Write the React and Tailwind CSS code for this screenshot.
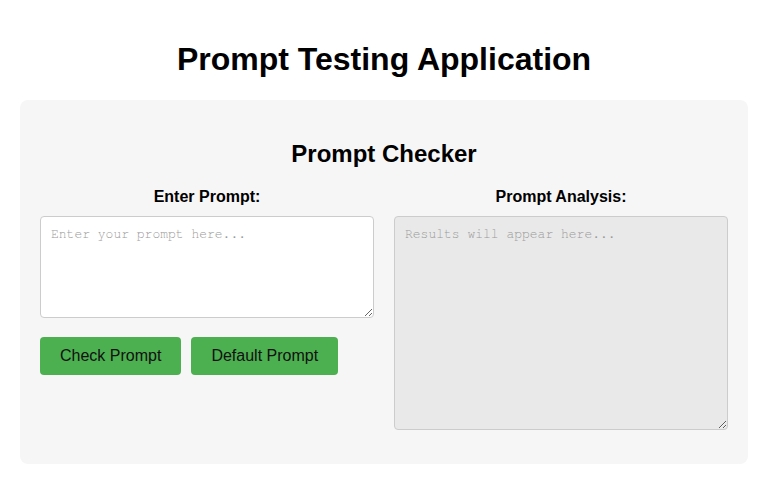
import React, { useState } from 'react';

const App = () => {
  const [prompt, setPrompt] = useState('');
  const [result, setResult] = useState('');

  return (
    <div className="min-h-screen bg-white px-5 pt-5 pb-4 font-['Liberation_Sans',Arial,sans-serif] text-black">
      <h1 className="text-center text-[32px] font-bold leading-[37px] mt-[21px] mb-[22px]">
        Prompt Testing Application
      </h1>

      {/* card */}
      <div className="bg-[#f6f6f6] rounded-lg p-5 pb-[34px]">
        <h2 className="text-center text-2xl font-bold leading-[28px] mt-5 mb-5">Prompt Checker</h2>

        <div className="grid grid-cols-2 gap-5">
          <div className="flex flex-col">
            <label className="text-center font-bold text-base leading-[18px] mb-[10px]">Enter Prompt:</label>
            <textarea
              value={prompt}
              onChange={(e) => setPrompt(e.target.value)}
              placeholder="Enter your prompt here..."
              className="block w-full h-[102px] p-[10px] bg-white border border-[#cccccc] rounded font-['Nimbus_Mono_PS','FreeMono',Courier,'Liberation_Mono',monospace] text-[13px] leading-[16px] placeholder:text-[#999999] outline-none"
            />
            <div className="flex gap-[10px] mt-[19px]">
              <button
                onClick={() => setResult(prompt ? 'Prompt looks good.' : '')}
                className="bg-[#4caf50] text-[#111] text-base leading-[18px] px-5 py-[10px] rounded"
              >
                Check Prompt
              </button>
              <button
                onClick={() => setPrompt('Write a short poem about the sea.')}
                className="bg-[#4caf50] text-[#111] text-base leading-[18px] px-5 py-[10px] rounded"
              >
                Default Prompt
              </button>
            </div>
          </div>

          <div className="flex flex-col">
            <label className="text-center font-bold text-base leading-[18px] mb-[10px]">Prompt Analysis:</label>
            <textarea
              readOnly
              value={result}
              placeholder="Results will appear here..."
              className="block w-full h-[214px] p-[10px] bg-[#e9e9e9] border border-[#cccccc] rounded font-['Nimbus_Mono_PS','FreeMono',Courier,'Liberation_Mono',monospace] text-[13px] leading-[16px] placeholder:text-[#999999] outline-none"
            />
          </div>
        </div>
      </div>
    </div>
  );
};

export default App;
